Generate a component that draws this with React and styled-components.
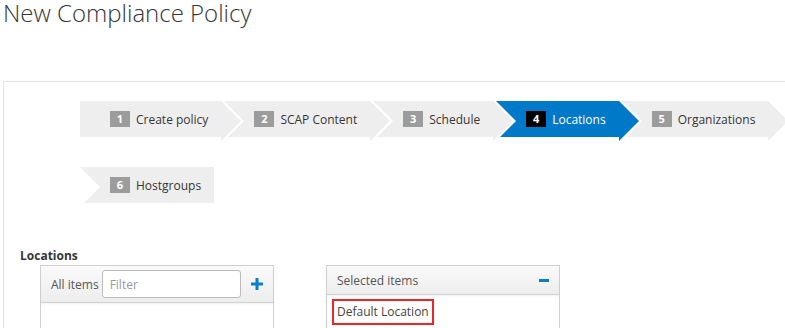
import React from "react";
import styled, { createGlobalStyle, css } from "styled-components";

const Global = createGlobalStyle`
  html, body { margin: 0; padding: 0; background: #fff; overflow: hidden; }
  body { font-family: "Open Sans", "Noto Sans", sans-serif; font-size: 12px; color: #363636; }
`;

const Page = styled.div`
  padding-left: 3px;
`;

const Title = styled.h1`
  margin: 0;
  font-family: "Open Sans", sans-serif;
  font-weight: 300;
  font-size: 24px;
  line-height: 26px;
  color: #363636;
`;

const Panel = styled.div`
  margin-top: 55px;
  width: 900px;
  height: 400px;
  border: 1px solid #e3e3e3;
  padding: 19px 0 0 0;
  box-sizing: border-box;
`;

const Steps = styled.ol`
  list-style: none;
  margin: 0 0 0 76px;
  padding: 0;
  max-width: 720px;
  display: flex;
  flex-wrap: wrap;
  column-gap: 3px;
  row-gap: 30px;
`;

const Step = styled.li`
  position: relative;
  height: 36px;
  display: flex;
  align-items: center;
  padding: 0 13px 0 30px;
  background: ${(p) => (p.$active ? "#0079c8" : "#eeeeee")};
  color: ${(p) => (p.$active ? "#ffffff" : "#363636")};
  font-size: 12px;
  white-space: nowrap;

  ${(p) =>
    !p.$first &&
    css`
      &::before {
        content: "";
        position: absolute;
        left: 0;
        top: 0;
        border-left: 20px solid #ffffff;
        border-top: 20px solid transparent;
        border-bottom: 20px solid transparent;
        z-index: 1;
      }
    `}

  ${(p) =>
    !p.$last &&
    css`
      &::after {
        content: "";
        position: absolute;
        right: -20px;
        top: 0;
        border-left: 20px solid ${p.$active ? "#0079c8" : "#eeeeee"};
        border-top: 20px solid transparent;
        border-bottom: 20px solid transparent;
        z-index: 2;
      }
    `}
`;

const StepNum = styled.span`
  display: inline-flex;
  align-items: center;
  justify-content: center;
  width: 20px;
  height: 16px;
  margin-right: 6px;
  background: ${(p) => (p.$active ? "#000000" : "#9c9c9c")};
  color: #ffffff;
  font-weight: 700;
  font-size: 11px;
  line-height: 16px;
`;

const FormGroup = styled.div`
  margin: 44px 0 0 16px;
`;

const Label = styled.div`
  font-weight: 700;
  font-size: 12px;
  line-height: 18px;
  color: #363636;
`;

const DualList = styled.div`
  display: flex;
  gap: 52px;
  margin-left: 20px;
`;

const ListBox = styled.div`
  width: 234px;
  box-sizing: border-box;
  border: 1px solid #d1d1d1;
  height: 200px;
`;

const ListHeader = styled.div`
  display: flex;
  align-items: center;
  box-sizing: border-box;
  height: ${(p) => (p.$tall ? "37px" : "29px")};
  padding: 0 10px;
  background: linear-gradient(#fafafa, #ededed);
  border-bottom: 1px solid #d1d1d1;
  box-shadow: 0 1px 2px rgba(0, 0, 0, 0.06);
  color: #555555;
  font-size: 12px;
`;

const FilterInput = styled.input`
  width: 139px;
  height: 28px;
  box-sizing: border-box;
  margin-left: 3px;
  padding: 0 7px;
  border: 1px solid #bbbbbb;
  border-radius: 3px;
  font-family: "Open Sans", sans-serif;
  font-size: 12px;
  color: #363636;
  outline: none;
  &::placeholder { color: #999999; }
`;

const IconButton = styled.span`
  margin-left: auto;
  display: inline-flex;
  color: #0a7fc8;
`;

const ListBody = styled.div`
  padding: 4px 5px;
`;

const SelectedItem = styled.span`
  display: inline-block;
  border: 2px solid #e8262c;
  padding: 2px 3px;
  line-height: 18px;
  font-size: 12px;
  color: #444444;
`;

const steps = [
  { n: 1, label: "Create policy" },
  { n: 2, label: "SCAP Content" },
  { n: 3, label: "Schedule" },
  { n: 4, label: "Locations", active: true },
  { n: 5, label: "Organizations" },
  { n: 6, label: "Hostgroups" },
];

const Plus = () => (
  <svg width="12" height="12" viewBox="0 0 12 12">
    <rect x="4.5" y="0" width="3" height="12" fill="currentColor" />
    <rect x="0" y="4.5" width="12" height="3" fill="currentColor" />
  </svg>
);

const Minus = () => (
  <svg width="10" height="12" viewBox="0 0 10 12">
    <rect x="0" y="5" width="10" height="3" fill="currentColor" />
  </svg>
);

export default function App() {
  return (
    <Page>
      <Global />
      <Title>New Compliance Policy</Title>
      <Panel>
        <Steps>
          {steps.map((s, i) => (
            <Step key={s.n} $first={i === 0} $last={i === steps.length - 1} $active={s.active}>
              <StepNum $active={s.active}>{s.n}</StepNum>
              {s.label}
            </Step>
          ))}
        </Steps>
        <FormGroup>
          <Label>Locations</Label>
          <DualList>
            <ListBox>
              <ListHeader $tall>
                All items
                <FilterInput placeholder="Filter" />
                <IconButton><Plus /></IconButton>
              </ListHeader>
              <ListBody />
            </ListBox>
            <ListBox>
              <ListHeader>
                Selected items
                <IconButton><Minus /></IconButton>
              </ListHeader>
              <ListBody>
                <SelectedItem>Default Location</SelectedItem>
              </ListBody>
            </ListBox>
          </DualList>
        </FormGroup>
      </Panel>
    </Page>
  );
}
